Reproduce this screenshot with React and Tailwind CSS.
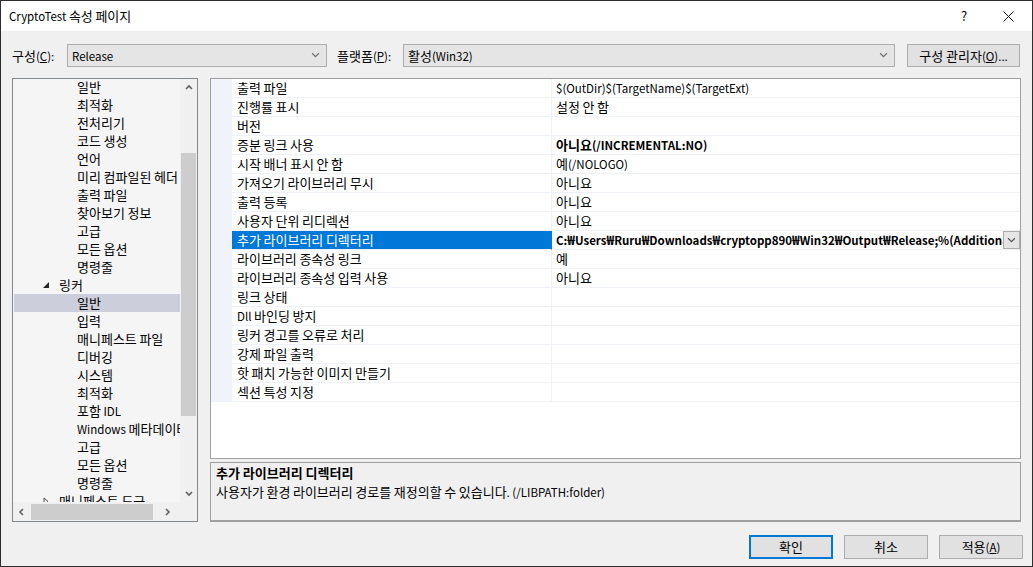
import React from 'react';

const treeItems = [
    ['일반', 2], ['최적화', 2], ['전처리기', 2], ['코드 생성', 2], ['언어', 2],
    ['미리 컴파일된 헤더', 2], ['출력 파일', 2], ['찾아보기 정보', 2], ['고급', 2],
    ['모든 옵션', 2], ['명령줄', 2], ['링커', 1, 'open'], ['일반', 2, 'sel'], ['입력', 2],
    ['매니페스트 파일', 2], ['디버깅', 2], ['시스템', 2], ['최적화', 2], ['포함 IDL', 2],
    ['Windows 메타데이터', 2], ['고급', 2], ['모든 옵션', 2], ['명령줄', 2],
    ['매니페스트 도구', 1, 'closed'],
];

const rows = [
    ['출력 파일', '$(OutDir)$(TargetName)$(TargetExt)'],
    ['진행률 표시', '설정 안 함'],
    ['버전', ''],
    ['증분 링크 사용', '아니요(/INCREMENTAL:NO)', 'bold'],
    ['시작 배너 표시 안 함', '예(/NOLOGO)'],
    ['가져오기 라이브러리 무시', '아니요'],
    ['출력 등록', '아니요'],
    ['사용자 단위 리디렉션', '아니요'],
    ['추가 라이브러리 디렉터리', 'C:₩Users₩Ruru₩Downloads₩cryptopp890₩Win32₩Output₩Release;%(AdditionalLibraryDirectories)', 'sel'],
    ['라이브러리 종속성 링크', '예'],
    ['라이브러리 종속성 입력 사용', '아니요'],
    ['링크 상태', ''],
    ['Dll 바인딩 방지', ''],
    ['링커 경고를 오류로 처리', ''],
    ['강제 파일 출력', ''],
    ['핫 패치 가능한 이미지 만들기', ''],
    ['섹션 특성 지정', ''],
];

// latin runs a bit smaller than hangul, like Malgun Gothic
function T({ children }) {
    const parts = String(children).split(/([\x20-\x7E]+)/);
    return parts.map((p, i) =>
        /^[\x20-\x7E]+$/.test(p) ? <span key={i} className="text-[11.5px]">{p}</span> : p
    );
}

function Chevron({ dir = 'down', color = '#606060', w = 8, sw = 1 }) {
    const pts = {
        down: '1,2 4,5 7,2',
        up: '1,5 4,2 7,5',
        left: '5,1 2,4 5,7',
        right: '3,1 6,4 3,7',
    }[dir];
    return (
        <svg width={w} height={w} viewBox="0 0 8 8">
            <polyline points={pts} fill="none" stroke={color} strokeWidth={sw} />
        </svg>
    );
}

function Select({ value, width }) {
    return (
        <div className={`${width} h-[23px] bg-[#e5e5e5] border border-[#adadad] flex items-center pl-[4px] pr-[6px]`}>
            <span className="flex-1"><T>{value}</T></span>
            <Chevron color="#6d6d6d" w={9} />
        </div>
    );
}

function TreeItem({ text, level, state }) {
    return (
        <div className={`h-[18px] flex items-center whitespace-nowrap ${state === 'sel' ? 'bg-[#cccedb] ml-px' : ''}`}>
            {level === 1 ? (
                <div className="pl-[30px] flex items-center">
                    <div className="w-[16px] h-[18px] flex items-center">
                        {state === 'open' ? (
                            <svg width="7" height="7" viewBox="0 0 7 7">
                                <polygon points="6,0 6,6 0,6" fill="#262626" />
                            </svg>
                        ) : (
                            <svg width="7" height="9" viewBox="0 0 7 9">
                                <polygon points="1,1 5,4.5 1,8" fill="none" stroke="#4a4a4a" strokeWidth="1" />
                            </svg>
                        )}
                    </div>
                    <span><T>{text}</T></span>
                </div>
            ) : (
                <span className={state === 'sel' ? 'pl-[63px]' : 'pl-[64px]'}><T>{text}</T></span>
            )}
        </div>
    );
}

export default function App() {
    return (
        <div className="w-[1033px] h-[567px] border border-[#2e2e2e] flex flex-col text-[13px] leading-[18px] text-black font-['Noto_Sans_CJK_KR','Noto_Sans',sans-serif] overflow-hidden">
            {/* title bar */}
            <div className="h-[30px] bg-white flex items-center pl-[8px]">
                <span className="flex-1"><T>CryptoTest 속성 페이지</T></span>
                <span className="w-[20px] text-center mr-[24px]">?</span>
                <div className="w-[20px] flex justify-center mr-[14px]">
                    <svg width="11" height="11" viewBox="0 0 11 11">
                        <path d="M0.5 0.5 L10.5 10.5 M10.5 0.5 L0.5 10.5" stroke="#111" strokeWidth="1" />
                    </svg>
                </div>
            </div>

            {/* body */}
            <div className="flex-1 bg-[#f0f0f0] flex flex-col px-[11px]">
                {/* toolbar */}
                <div className="mt-[13px] h-[23px] flex items-center">
                    <span className="w-[55px]">구성<span className="text-[11.5px]">(<span className="underline">C</span>):</span></span>
                    <Select value="Release" width="w-[260px]" />
                    <span className="w-[66px] ml-[10px]">플랫폼<span className="text-[11.5px]">(<span className="underline">P</span>):</span></span>
                    <Select value="활성(Win32)" width="w-[492px]" />
                    <div className="ml-[12px] w-[113px] h-[23px] bg-[#e1e1e1] border border-[#adadad] flex items-center justify-center">
                        구성 관리자<span className="text-[11.5px]">(<span className="underline">O</span>)...</span>
                    </div>
                </div>

                {/* main */}
                <div className="mt-[11px] h-[444px] flex gap-[12px]">
                    {/* tree */}
                    <div className="w-[186px] shrink-0 border border-[#828790] bg-[#f5f5f5] flex flex-col">
                        <div className="h-[423px] flex">
                            <div className="flex-1 overflow-hidden -mt-px">
                                {treeItems.map(([t, l, s], i) => (
                                    <TreeItem key={i} text={t} level={l} state={s} />
                                ))}
                            </div>
                            <div className="w-[17px] flex flex-col bg-[#f0f0f0]">
                                <div className="h-[17px] flex items-center justify-center">
                                    <Chevron dir="up" sw={1.6} />
                                </div>
                                <div className="h-[57px]" />
                                <div className="h-[263px] mx-px bg-[#cdcdcd]" />
                                <div className="flex-1" />
                                <div className="h-[17px] flex items-center justify-center">
                                    <Chevron dir="down" sw={1.6} />
                                </div>
                            </div>
                        </div>
                        <div className="flex-1 flex items-center bg-[#f0f0f0]">
                            <div className="w-[18px] flex justify-center">
                                <Chevron dir="left" sw={1.6} />
                            </div>
                            <div className="w-[122px] h-[16px] bg-[#cdcdcd]" />
                            <div className="w-[28px] flex justify-center">
                                <Chevron dir="right" sw={1.6} />
                            </div>
                        </div>
                    </div>

                    {/* right side */}
                    <div className="flex-1 min-w-0 flex flex-col gap-[3px]">
                        <div className="h-[381px] border border-[#a0a0a0] bg-white overflow-hidden">
                            {rows.map(([name, value, flag], i) => (
                                <div key={i} className="h-[19px] flex">
                                    <div className="w-[21px] shrink-0 bg-[#f0f4fa]" />
                                    <div className={`w-[320px] shrink-0 pl-[5px] border-b border-r whitespace-nowrap ${flag === 'sel' ? 'bg-[#0078d7] text-white border-[#0078d7] border-b-[#eef1f6]' : 'border-[#eef1f6]'}`}>
                                        <T>{name}</T>
                                    </div>
                                    <div className={`flex-1 flex border-b border-[#eef1f6] min-w-0 ${flag ? 'font-bold' : ''}`}>
                                        <span className="flex-1 min-w-0 pl-[4px] whitespace-nowrap overflow-hidden"><T>{value}</T></span>
                                        {flag === 'sel' && (
                                            <div className="w-[17px] shrink-0 h-[18px] bg-[#e5e5e5] border border-[#adadad] flex items-center justify-center">
                                                <Chevron color="#555" w={9} />
                                            </div>
                                        )}
                                    </div>
                                </div>
                            ))}
                        </div>
                        <div className="flex-1 border border-b-2 border-[#a0a0a0] bg-[#f0f0f0] px-[5px] leading-[19px]">
                            <div className="font-bold">추가 라이브러리 디렉터리</div>
                            <div><T>사용자가 환경 라이브러리 경로를 재정의할 수 있습니다. (/LIBPATH:folder)</T></div>
                        </div>
                    </div>
                </div>

                {/* buttons */}
                <div className="mt-[13px] h-[24px] flex justify-end gap-[11px] -mr-[2px]">
                    <div className="w-[84px] h-[24px] bg-[#e1e1e1] border-2 border-[#0078d7] flex items-center justify-center">확인</div>
                    <div className="w-[84px] h-[24px] bg-[#e1e1e1] border border-[#adadad] flex items-center justify-center">취소</div>
                    <div className="w-[84px] h-[24px] bg-[#e1e1e1] border border-[#adadad] flex items-center justify-center">
                        적용<span className="text-[11.5px]">(<span className="underline">A</span>)</span>
                    </div>
                </div>
            </div>
        </div>
    );
}
